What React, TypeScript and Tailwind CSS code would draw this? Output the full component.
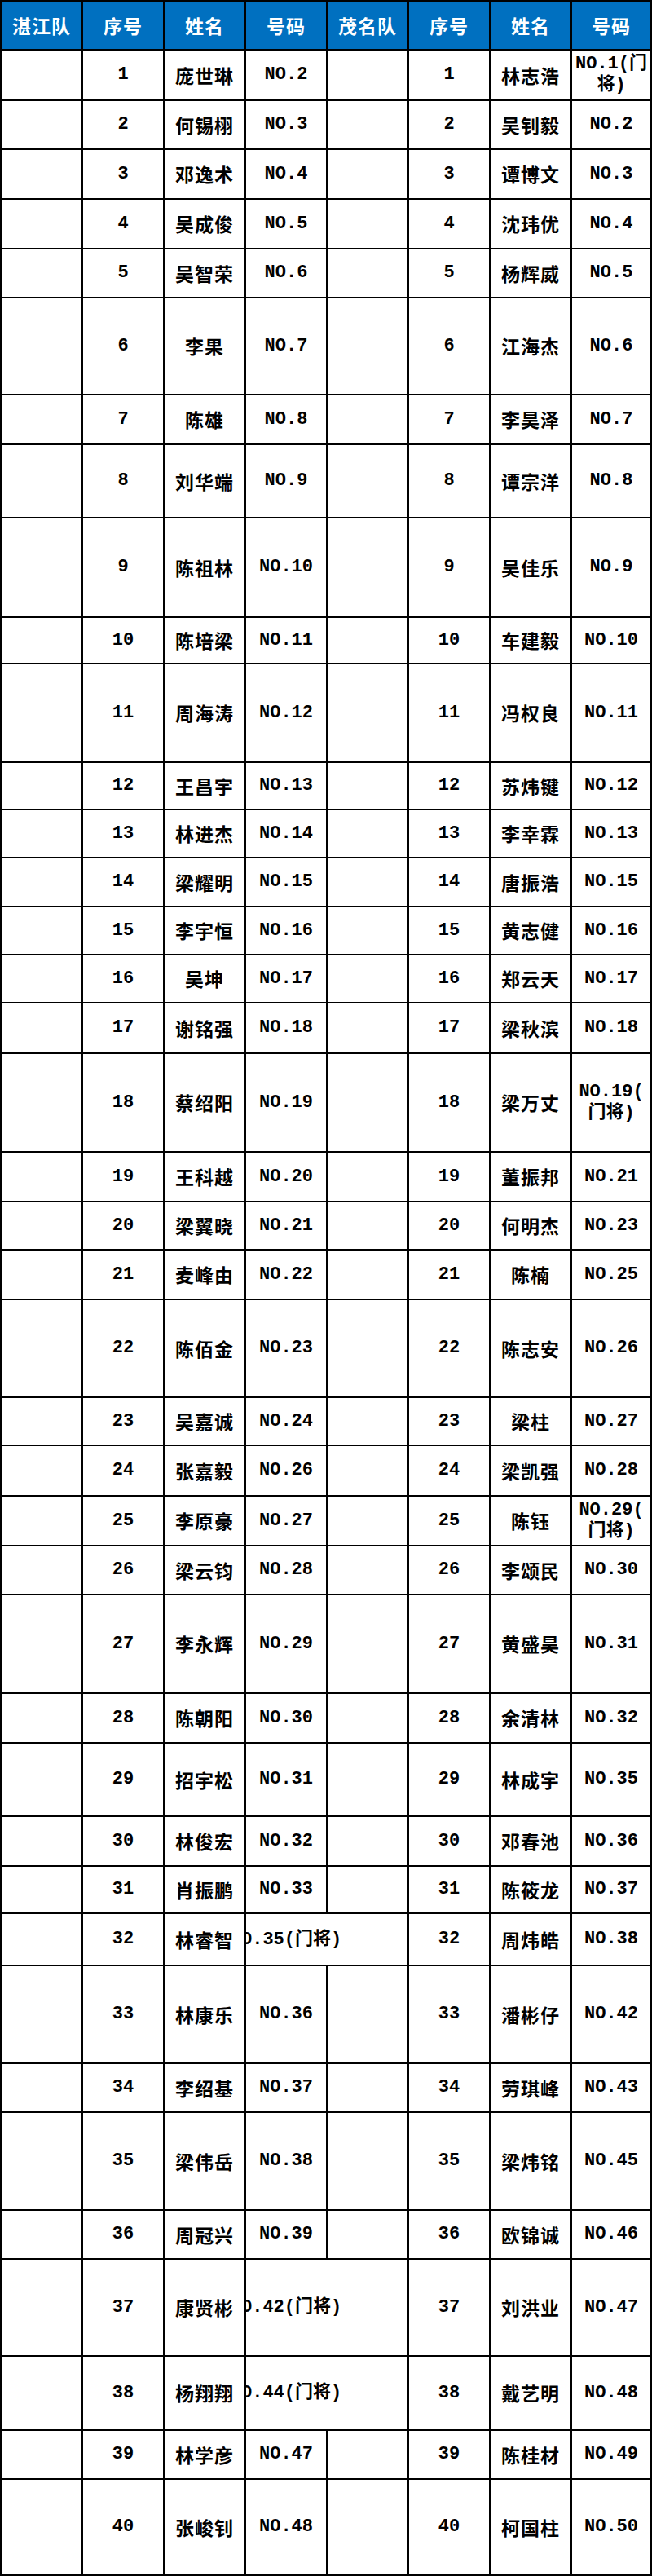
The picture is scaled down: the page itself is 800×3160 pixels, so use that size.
import { FC } from 'react';

type Side = [string, string, string];

type Row = {
  h: string;
  zj: Side;
  mm: Side;
  spill?: boolean; // 号码 text runs into the empty 茂名队 cell
};

// row heights are taken from the sheet; each height includes the top rule
const rows: Row[] = [
  { h: 'h-[62px]', zj: ['1', '庞世琳', 'NO.2'], mm: ['1', '林志浩', 'NO.1(门\n将)'] },
  { h: 'h-[60px]', zj: ['2', '何锡栩', 'NO.3'], mm: ['2', '吴钊毅', 'NO.2'] },
  { h: 'h-[61px]', zj: ['3', '邓逸术', 'NO.4'], mm: ['3', '谭博文', 'NO.3'] },
  { h: 'h-[61px]', zj: ['4', '吴成俊', 'NO.5'], mm: ['4', '沈玮优', 'NO.4'] },
  { h: 'h-[60px]', zj: ['5', '吴智荣', 'NO.6'], mm: ['5', '杨辉威', 'NO.5'] },
  { h: 'h-[119px]', zj: ['6', '李果', 'NO.7'], mm: ['6', '江海杰', 'NO.6'] },
  { h: 'h-[61px]', zj: ['7', '陈雄', 'NO.8'], mm: ['7', '李昊泽', 'NO.7'] },
  { h: 'h-[90px]', zj: ['8', '刘华端', 'NO.9'], mm: ['8', '谭宗洋', 'NO.8'] },
  { h: 'h-[122px]', zj: ['9', '陈祖林', 'NO.10'], mm: ['9', '吴佳乐', 'NO.9'] },
  { h: 'h-[57px]', zj: ['10', '陈培梁', 'NO.11'], mm: ['10', '车建毅', 'NO.10'] },
  { h: 'h-[121px]', zj: ['11', '周海涛', 'NO.12'], mm: ['11', '冯权良', 'NO.11'] },
  { h: 'h-[58px]', zj: ['12', '王昌宇', 'NO.13'], mm: ['12', '苏炜键', 'NO.12'] },
  { h: 'h-[59px]', zj: ['13', '林进杰', 'NO.14'], mm: ['13', '李幸霖', 'NO.13'] },
  { h: 'h-[60px]', zj: ['14', '梁耀明', 'NO.15'], mm: ['14', '唐振浩', 'NO.15'] },
  { h: 'h-[59px]', zj: ['15', '李宇恒', 'NO.16'], mm: ['15', '黄志健', 'NO.16'] },
  { h: 'h-[59px]', zj: ['16', '吴坤', 'NO.17'], mm: ['16', '郑云天', 'NO.17'] },
  { h: 'h-[62px]', zj: ['17', '谢铭强', 'NO.18'], mm: ['17', '梁秋滨', 'NO.18'] },
  { h: 'h-[121px]', zj: ['18', '蔡绍阳', 'NO.19'], mm: ['18', '梁万丈', 'NO.19(\n门将)'] },
  { h: 'h-[61px]', zj: ['19', '王科越', 'NO.20'], mm: ['19', '董振邦', 'NO.21'] },
  { h: 'h-[59px]', zj: ['20', '梁翼晓', 'NO.21'], mm: ['20', '何明杰', 'NO.23'] },
  { h: 'h-[61px]', zj: ['21', '麦峰由', 'NO.22'], mm: ['21', '陈楠', 'NO.25'] },
  { h: 'h-[120px]', zj: ['22', '陈佰金', 'NO.23'], mm: ['22', '陈志安', 'NO.26'] },
  { h: 'h-[59px]', zj: ['23', '吴嘉诚', 'NO.24'], mm: ['23', '梁柱', 'NO.27'] },
  { h: 'h-[62px]', zj: ['24', '张嘉毅', 'NO.26'], mm: ['24', '梁凯强', 'NO.28'] },
  { h: 'h-[61px]', zj: ['25', '李原豪', 'NO.27'], mm: ['25', '陈钰', 'NO.29(\n门将)'] },
  { h: 'h-[60px]', zj: ['26', '梁云钧', 'NO.28'], mm: ['26', '李颂民', 'NO.30'] },
  { h: 'h-[121px]', zj: ['27', '李永辉', 'NO.29'], mm: ['27', '黄盛昊', 'NO.31'] },
  { h: 'h-[61px]', zj: ['28', '陈朝阳', 'NO.30'], mm: ['28', '余清林', 'NO.32'] },
  { h: 'h-[90px]', zj: ['29', '招宇松', 'NO.31'], mm: ['29', '林成宇', 'NO.35'] },
  { h: 'h-[61px]', zj: ['30', '林俊宏', 'NO.32'], mm: ['30', '邓春池', 'NO.36'] },
  { h: 'h-[58px]', zj: ['31', '肖振鹏', 'NO.33'], mm: ['31', '陈筱龙', 'NO.37'] },
  { h: 'h-[64px]', zj: ['32', '林睿智', 'NO.35(门将)'], mm: ['32', '周炜皓', 'NO.38'], spill: true },
  { h: 'h-[120px]', zj: ['33', '林康乐', 'NO.36'], mm: ['33', '潘彬仔', 'NO.42'] },
  { h: 'h-[60px]', zj: ['34', '李绍基', 'NO.37'], mm: ['34', '劳琪峰', 'NO.43'] },
  { h: 'h-[120px]', zj: ['35', '梁伟岳', 'NO.38'], mm: ['35', '梁炜铭', 'NO.45'] },
  { h: 'h-[60px]', zj: ['36', '周冠兴', 'NO.39'], mm: ['36', '欧锦诚', 'NO.46'] },
  { h: 'h-[119px]', zj: ['37', '康贤彬', 'NO.42(门将)'], mm: ['37', '刘洪业', 'NO.47'], spill: true },
  { h: 'h-[91px]', zj: ['38', '杨翔翔', 'NO.44(门将)'], mm: ['38', '戴艺明', 'NO.48'], spill: true },
  { h: 'h-[60px]', zj: ['39', '林学彦', 'NO.47'], mm: ['39', '陈桂材', 'NO.49'] },
  { h: 'h-[118px]', zj: ['40', '张峻钊', 'NO.48'], mm: ['40', '柯国柱', 'NO.50'] },
];

const cell = 'flex items-center justify-center w-[100px] shrink-0 h-full border-l-2 border-t-2 border-black';
const cjk = "font-['Noto_Sans_CJK_SC',sans-serif] text-[23px] font-bold tracking-[1px]";
const mono = "font-['Liberation_Mono','Noto_Sans_CJK_SC',monospace] text-[22px] font-bold";

const headers = ['湛江队', '序号', '姓名', '号码', '茂名队', '序号', '姓名', '号码'];

const Num: FC<{ v: string }> = ({ v }) => (
  <span className={`${mono} whitespace-pre-line text-center leading-[26px]`}>{v}</span>
);

const App: FC = () => {
  return (
    <div className="w-[800px] bg-white text-black border-b-2 border-black">
      {/* header */}
      <div className="flex h-[60px] bg-[#0070c0] text-white">
        {headers.map((t, i) => (
          <div key={i} className={`${cell} ${i === 7 ? 'border-r-2' : ''}`}>
            <span className={cjk}>{t}</span>
          </div>
        ))}
      </div>

      {rows.map((r) => (
        <div key={r.zj[0]} className={`flex ${r.h}`}>
          <div className={cell} />
          <div className={cell}>
            <Num v={r.zj[0]} />
          </div>
          <div className={cell}>
            <span className={cjk}>{r.zj[1]}</span>
          </div>
          {r.spill ? (
            <div className="flex items-center w-[200px] shrink-0 h-full border-l-2 border-t-2 border-black overflow-hidden">
              <div className="flex justify-center w-[98px] shrink-0">
                <span className={`${mono} whitespace-nowrap shrink-0`}>{r.zj[2]}</span>
              </div>
            </div>
          ) : (
            <>
              <div className={cell}>
                <Num v={r.zj[2]} />
              </div>
              <div className={cell} />
            </>
          )}
          <div className={cell}>
            <Num v={r.mm[0]} />
          </div>
          <div className={cell}>
            <span className={cjk}>{r.mm[1]}</span>
          </div>
          <div className={`${cell} border-r-2`}>
            <Num v={r.mm[2]} />
          </div>
        </div>
      ))}
    </div>
  );
};

export default App;
